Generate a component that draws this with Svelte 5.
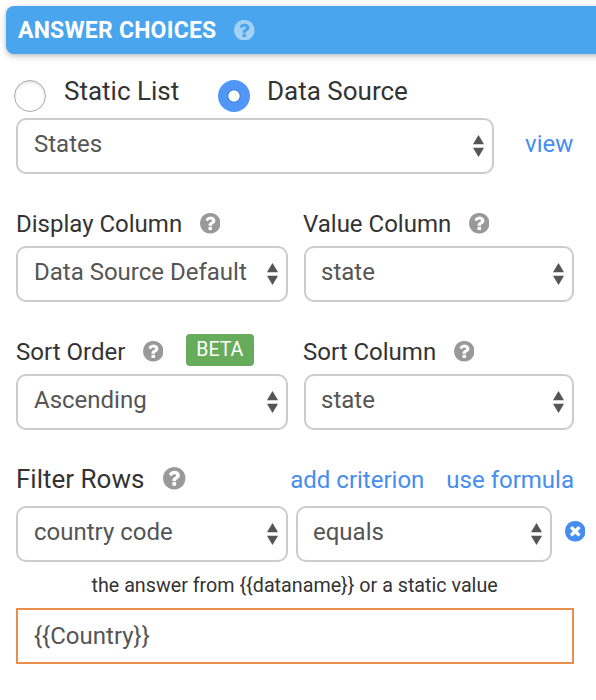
<script>
  let source = $state('data');
  const up = 'M0 9.2L5.5 0L11 9.2Z';
  const down = 'M0 12.8H11L5.5 22Z';
</script>

{#snippet help(size)}
  <svg class="help" width={size} height={size} viewBox="128 128 1536 1536" aria-hidden="true">
    <path d="M1024 1376v-192q0-14-9-23t-23-9h-192q-14 0-23 9t-9 23v192q0 14 9 23t23 9h192q14 0 23-9t9-23zm256-672q0-88-55.5-163t-138.5-116-170-41q-243 0-371 213-15 24 8 42l132 100q7 6 19 6 16 0 25-12 53-68 86-92 34-24 86-24 48 0 85.5 26t37.5 59q0 38-20 61t-68 45q-63 28-115.5 86.5t-52.5 125.5v36q0 14 9 23t23 9h192q14 0 23-9t9-23q0-19 21.5-49.5t54.5-49.5q32-18 49-28.5t46-35 44.5-48 28-60.5 12.5-81zm384 192q0 209-103 385.5t-279.5 279.5-385.5 103-385.5-103-279.5-279.5-103-385.5 103-385.5 279.5-279.5 385.5-103 385.5 103 279.5 279.5 103 385.5z" />
  </svg>
{/snippet}

{#snippet dropdown(value, kind)}
  <button class="select {kind}" type="button">
    <span>{value}</span>
    <svg width="11" height="22" viewBox="0 0 11 22" aria-hidden="true"><path d={up} /><path d={down} /></svg>
  </button>
{/snippet}

<main>
  <header><h1>ANSWER CHOICES</h1>{@render help(20.5)}</header>

  <div class="radios">
    <label class="first"><input type="radio" value="static" bind:group={source} /><span>Static List</span></label>
    <label class="second"><input type="radio" value="data" bind:group={source} /><span>Data Source</span></label>
  </div>

  <div class="source">
    {@render dropdown('States', 'wide')}
    <a href="#view">view</a>
  </div>

  <div class="columns">
    <section>
      <div class="caption"><span>Display Column</span>{@render help(20.5)}</div>
      {@render dropdown('Data Source Default', 'half')}
    </section>
    <section>
      <div class="caption"><span>Value Column</span>{@render help(20.5)}</div>
      {@render dropdown('state', 'half right')}
    </section>
  </div>

  <div class="columns">
    <section>
      <div class="caption"><span>Sort Order</span>{@render help(20.5)}<b class="beta">BETA</b></div>
      {@render dropdown('Ascending', 'half')}
    </section>
    <section>
      <div class="caption"><span>Sort Column</span>{@render help(20.5)}</div>
      {@render dropdown('state', 'half right')}
    </section>
  </div>

  <div class="filter-head">
    <span class="title">Filter Rows</span>{@render help(22.5)}
    <nav><a href="#add">add criterion</a><a href="#formula">use formula</a></nav>
  </div>
  <div class="filter">
    {@render dropdown('country code', 'half')}
    {@render dropdown('equals', 'operator')}
    <button class="remove" type="button" aria-label="Remove">
      <svg width="20.5" height="20.5" viewBox="128 128 1536 1536"><path d="M1277 1122q0-26-19-45l-181-181 181-181q19-19 19-45 0-27-19-46l-90-90q-19-19-46-19-26 0-45 19l-181 181-181-181q-19-19-45-19-27 0-46 19l-90 90q-19 19-19 46 0 26 19 45l181 181-181 181q-19 19-19 45 0 27 19 46l90 90q19 19 46 19 26 0 45-19l181-181 181 181q19 19 45 19 27 0 46-19l90-90q19-19 19-46zm387-226q0 209-103 385.5t-279.5 279.5-385.5 103-385.5-103-279.5-279.5-103-385.5 103-385.5 279.5-279.5 385.5-103 385.5 103 279.5 279.5 103 385.5z" /></svg>
    </button>
  </div>

  <p>{'the answer from {{dataname}} or a static value'}</p>
  <div class="field">{'{{Country}}'}</div>
</main>

<style>
  :global(body) { margin: 0; background: #fff; overflow: hidden; }
  main {
    box-sizing: border-box; width: 596px; height: 700px; padding-top: 6px; overflow: hidden;
    font-family: Roboto, "Liberation Sans", sans-serif; font-size: 24px; color: #333;
    white-space: nowrap; background: #fff;
  }
  svg { display: block; flex: none; }
  .help { fill: #999; }
  header {
    display: flex; align-items: center; box-sizing: border-box; height: 48px; width: 620px;
    margin-left: 6px; padding-left: 12px; border-radius: 8px; background: #49a5ee;
    box-shadow: 0 2px 4px rgba(0,0,0,.16), 0 2px 10px rgba(0,0,0,.12);
  }
  h1 { margin: 0; width: 216px; font-size: 23px; letter-spacing: .22px; line-height: 48px; padding-top: 1px; font-weight: 700; color: #fff; }
  header .help { fill: #a4d2f7; }
  .radios { display: flex; height: 38px; margin: 26px 0 0 14px; }
  label { display: flex; align-items: flex-start; font-size: 26px; line-height: 22px; }
  label.first { width: 204px; }
  label input {
    appearance: none; box-sizing: border-box; flex: none; width: 32px; height: 32px; margin: 0 18px 0 0;
    border: 1px solid #aaa; border-radius: 50%; background: #fff;
    box-shadow: inset 0 2px 3px rgba(0,0,0,.1);
  }
  label.second input { margin-right: 17px; }
  label input:checked {
    border: 0; background: radial-gradient(circle, #fff 5.2px, #4480d8 6px, #5096f6 7.5px);
    box-shadow: none;
  }
  a { color: #468df0; text-decoration: none; }
  .source { display: flex; margin-left: 16px; }
  .source a { margin-left: 31px; line-height: 52px; }
  .select {
    display: flex; align-items: flex-start; justify-content: space-between; box-sizing: border-box; height: 56px;
    padding: 0 8px 0 16px; border: 2px solid #ccc; border-radius: 10px; background: #fff;
    font: inherit; line-height: 48px; color: #555; flex: none;
  }
  .select svg { margin-top: 15px; fill: #555; }
  .wide { width: 478px; }
  .half { width: 272px; }
  .right { width: 270px; padding-left: 15px; }
  .operator { width: 256px; padding-left: 15px; margin-left: 8px; }
  .columns { display: grid; grid-template-columns: 288px 270px; margin-left: 16px; margin-top: 28px; }
  .columns section:last-child .caption { margin-left: -1px; }
  .caption { display: flex; align-items: center; height: 44px; }
  .caption .help { margin: -1px 0 0 17.5px; }
  .beta {
    width: 68px; height: 32px; margin: -4px 0 0 23px; border-radius: 4px; background: #67ac5b;
    color: #fff; font-weight: 400; font-size: 19.5px; line-height: 31px; text-align: center; text-indent: -1px;
  }
  .filter-head { display: flex; align-items: center; height: 60px; margin: 19px 22px 0 16px; }
  .title { font-size: 26px; }
  .filter-head .help { margin: -1px 0 0 19px; }
  nav { display: flex; gap: 22px; margin-left: auto; padding-top: 2px; }
  .filter { display: flex; margin: -3px 0 0 16px; }
  .remove { margin: 15px 0 0 12.5px; padding: 0; height: 20.5px; border: 0; background: none; fill: #468df0; }
  p { margin: 12px 0 0 91.5px; font-size: 19.72px; line-height: 24px; }
  .field {
    box-sizing: border-box; width: 558px; height: 56px; margin: 10px 0 0 16px; padding-left: 16px;
    border: 2px solid #e8904b; line-height: 52px; color: #555;
  }
</style>
